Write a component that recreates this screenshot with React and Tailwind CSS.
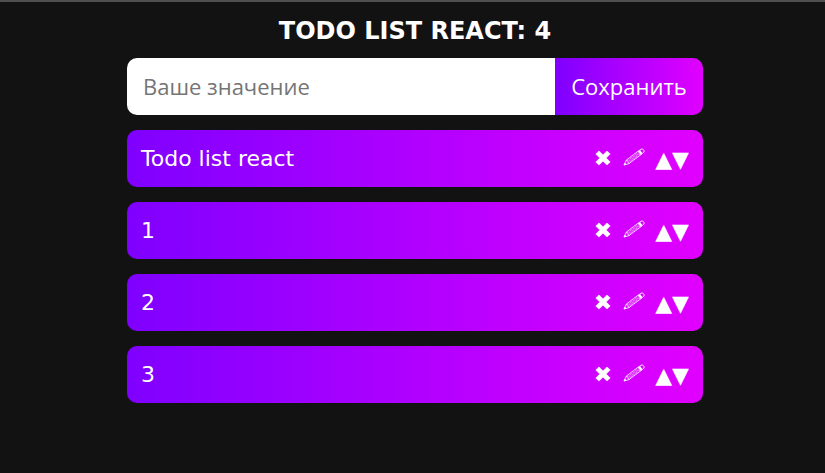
const items = ["Todo list react", "1", "2", "3"];

function Pencil() {
  return (
    <svg width="22" height="18" viewBox="0 0 22 18" fill="none" stroke="white" strokeWidth="0.9" strokeLinejoin="round">
      <path d="M1 17 3.2 12.2 15.6 2.8 18.4 6.4 6 15.6Z" strokeWidth="0.8" />
      <path d="M3.8 13.1 16.4 3.8M4.6 14 17 4.8M5.3 14.9 17.6 5.7" strokeWidth="0.6" strokeDasharray="1.4 0.5" />
      <path d="M3.2 12.2 6 15.6" strokeWidth="0.6" />
      <path d="M1 17 1.9 15.1 3.1 16.3Z" fill="white" strokeWidth="0.4" />
      <path d="M15.2 3.2 16.8 2 19.3 5.4 17.7 6.7Z" fill="white" strokeWidth="0.4" />
      <path d="M16.8 2 18 1.3C20 .1 22.2 2.9 20.5 4.6L19.3 5.4" />
    </svg>
  );
}

function TodoRow({ text }) {
  return (
    <li className="flex h-[57px] items-center justify-between rounded-[10px] bg-[linear-gradient(to_right,#7f00ff,#e100ff)] px-[14px] text-[22px] text-white">
      <span>{text}</span>
      <div className="flex items-center">
        <button className="mr-[11px]">✖</button>
        <button className="mr-[10px] pb-[3px]" aria-label="Edit"><Pencil /></button>
        <button className="pt-[2px]">▲</button>
        <button className="pt-[2px]">▼</button>
      </div>
    </li>
  );
}

export default function App() {
  return (
    <div className="min-h-screen border-t-2 border-[#4f4f4f] bg-[#121212] font-['DejaVu_Sans',sans-serif]">
      <main className="ml-[127px] flex w-[576px] flex-col pt-[12px]">
        <h1 className="mb-[9px] text-center text-[24px] leading-[35px] font-bold text-white">TODO LIST REACT: 4</h1>
        <form className="mb-[15px] flex h-[57px] overflow-hidden rounded-[10px] font-['Open_Sans','Noto_Sans',sans-serif] text-[22px]">
          <input placeholder="Ваше значение" className="min-w-0 flex-1 bg-white px-4 placeholder:text-[#757575]" />
          <button type="button" className="w-[148px] bg-[linear-gradient(to_right,#7f00ff,#e100ff)] text-white">Сохранить</button>
        </form>
        <ul className="flex flex-col gap-[15px]">
          {items.map((text) => <TodoRow key={text} text={text} />)}
        </ul>
      </main>
    </div>
  );
}
